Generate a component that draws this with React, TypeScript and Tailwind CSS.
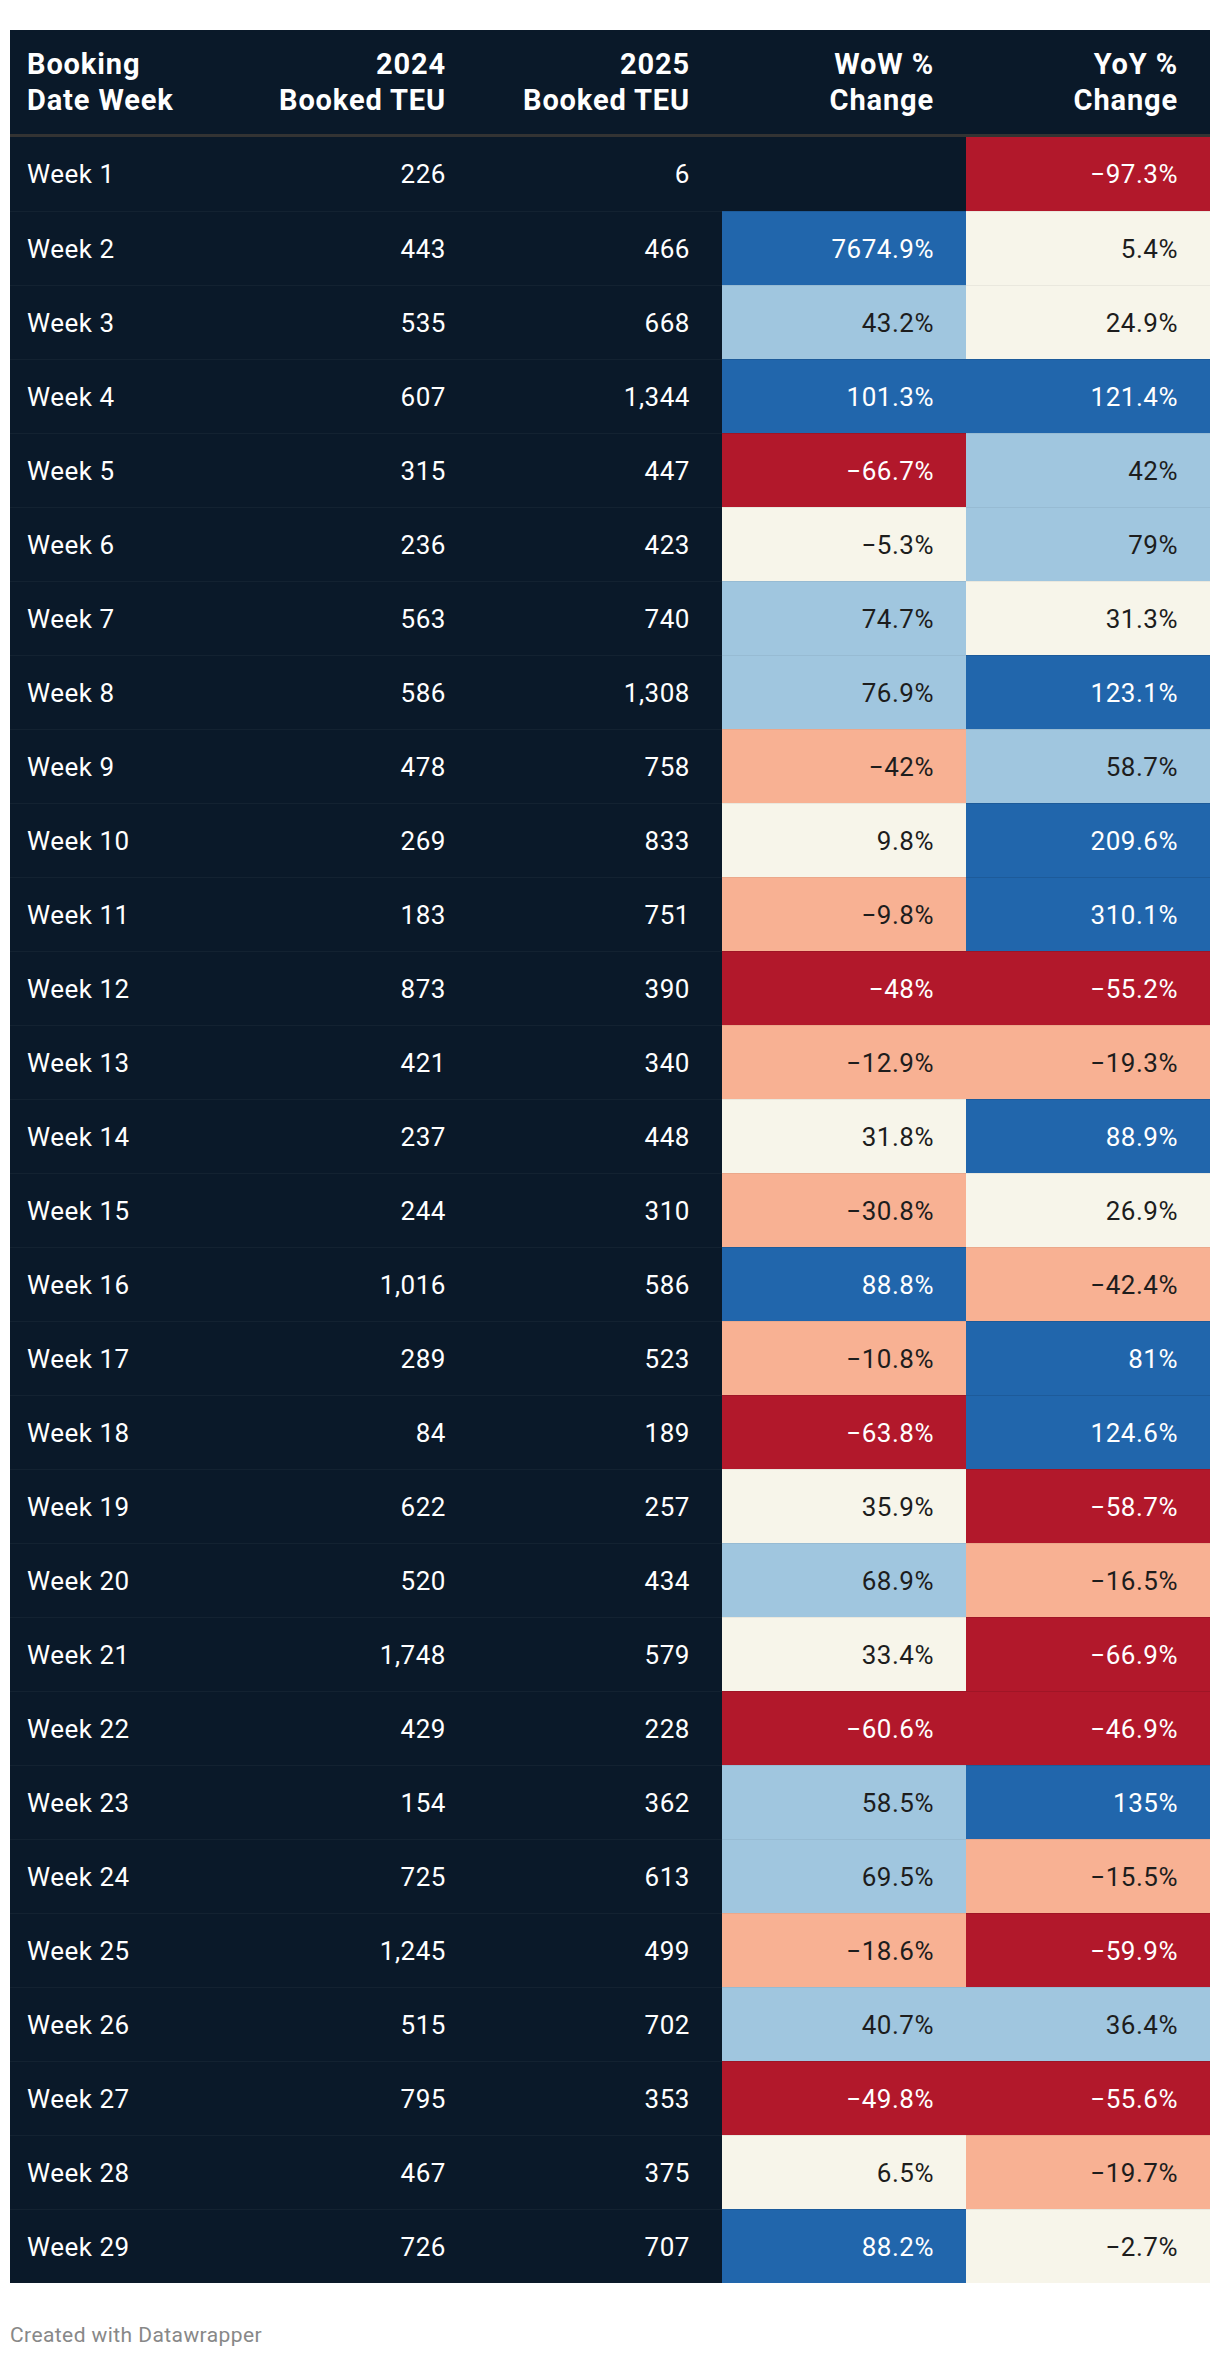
type Tone = "D" | "R" | "S" | "C" | "L" | "B";

type Row = {
  week: string;
  y2024: string;
  y2025: string;
  wow: string;
  wowTone: Tone;
  yoy: string;
  yoyTone: Tone;
};

const rows: Row[] = [
  { week: "Week 1", y2024: "226", y2025: "6", wow: "", wowTone: "D", yoy: "−97.3%", yoyTone: "R" },
  { week: "Week 2", y2024: "443", y2025: "466", wow: "7674.9%", wowTone: "B", yoy: "5.4%", yoyTone: "C" },
  { week: "Week 3", y2024: "535", y2025: "668", wow: "43.2%", wowTone: "L", yoy: "24.9%", yoyTone: "C" },
  { week: "Week 4", y2024: "607", y2025: "1,344", wow: "101.3%", wowTone: "B", yoy: "121.4%", yoyTone: "B" },
  { week: "Week 5", y2024: "315", y2025: "447", wow: "−66.7%", wowTone: "R", yoy: "42%", yoyTone: "L" },
  { week: "Week 6", y2024: "236", y2025: "423", wow: "−5.3%", wowTone: "C", yoy: "79%", yoyTone: "L" },
  { week: "Week 7", y2024: "563", y2025: "740", wow: "74.7%", wowTone: "L", yoy: "31.3%", yoyTone: "C" },
  { week: "Week 8", y2024: "586", y2025: "1,308", wow: "76.9%", wowTone: "L", yoy: "123.1%", yoyTone: "B" },
  { week: "Week 9", y2024: "478", y2025: "758", wow: "−42%", wowTone: "S", yoy: "58.7%", yoyTone: "L" },
  { week: "Week 10", y2024: "269", y2025: "833", wow: "9.8%", wowTone: "C", yoy: "209.6%", yoyTone: "B" },
  { week: "Week 11", y2024: "183", y2025: "751", wow: "−9.8%", wowTone: "S", yoy: "310.1%", yoyTone: "B" },
  { week: "Week 12", y2024: "873", y2025: "390", wow: "−48%", wowTone: "R", yoy: "−55.2%", yoyTone: "R" },
  { week: "Week 13", y2024: "421", y2025: "340", wow: "−12.9%", wowTone: "S", yoy: "−19.3%", yoyTone: "S" },
  { week: "Week 14", y2024: "237", y2025: "448", wow: "31.8%", wowTone: "C", yoy: "88.9%", yoyTone: "B" },
  { week: "Week 15", y2024: "244", y2025: "310", wow: "−30.8%", wowTone: "S", yoy: "26.9%", yoyTone: "C" },
  { week: "Week 16", y2024: "1,016", y2025: "586", wow: "88.8%", wowTone: "B", yoy: "−42.4%", yoyTone: "S" },
  { week: "Week 17", y2024: "289", y2025: "523", wow: "−10.8%", wowTone: "S", yoy: "81%", yoyTone: "B" },
  { week: "Week 18", y2024: "84", y2025: "189", wow: "−63.8%", wowTone: "R", yoy: "124.6%", yoyTone: "B" },
  { week: "Week 19", y2024: "622", y2025: "257", wow: "35.9%", wowTone: "C", yoy: "−58.7%", yoyTone: "R" },
  { week: "Week 20", y2024: "520", y2025: "434", wow: "68.9%", wowTone: "L", yoy: "−16.5%", yoyTone: "S" },
  { week: "Week 21", y2024: "1,748", y2025: "579", wow: "33.4%", wowTone: "C", yoy: "−66.9%", yoyTone: "R" },
  { week: "Week 22", y2024: "429", y2025: "228", wow: "−60.6%", wowTone: "R", yoy: "−46.9%", yoyTone: "R" },
  { week: "Week 23", y2024: "154", y2025: "362", wow: "58.5%", wowTone: "L", yoy: "135%", yoyTone: "B" },
  { week: "Week 24", y2024: "725", y2025: "613", wow: "69.5%", wowTone: "L", yoy: "−15.5%", yoyTone: "S" },
  { week: "Week 25", y2024: "1,245", y2025: "499", wow: "−18.6%", wowTone: "S", yoy: "−59.9%", yoyTone: "R" },
  { week: "Week 26", y2024: "515", y2025: "702", wow: "40.7%", wowTone: "L", yoy: "36.4%", yoyTone: "L" },
  { week: "Week 27", y2024: "795", y2025: "353", wow: "−49.8%", wowTone: "R", yoy: "−55.6%", yoyTone: "R" },
  { week: "Week 28", y2024: "467", y2025: "375", wow: "6.5%", wowTone: "C", yoy: "−19.7%", yoyTone: "S" },
  { week: "Week 29", y2024: "726", y2025: "707", wow: "88.2%", wowTone: "B", yoy: "−2.7%", yoyTone: "C" },
];

const toneClass: Record<Tone, string> = {
  D: "bg-[#0a1929] text-white border-white/[0.04]",
  R: "bg-[#b2182b] text-white border-black/10",
  S: "bg-[#f8b193] text-[#1d1d1d] border-black/5",
  C: "bg-[#f7f5ea] text-[#1d1d1d] border-black/5",
  L: "bg-[#a0c6df] text-[#1d1d1d] border-black/5",
  B: "bg-[#2166ac] text-white border-black/10",
};

function Cell({ children, tone, first }: { children: React.ReactNode; tone: Tone; first: boolean }) {
  return (
    <div
      className={`flex h-[74px] items-center justify-end pr-[32px] ${toneClass[tone]} ${first ? "" : "border-t"}`}
    >
      {children}
    </div>
  );
}

export default function App() {
  return (
    <div className="min-h-screen bg-white pt-[30px] font-['Roboto',sans-serif]">
      <div className="mx-[10px] w-[1200px]">
        <div className="grid h-[104px] grid-cols-[224px_244px_244px_244px_244px] items-center bg-[#0a1929] text-[29px] font-bold leading-[36px] tracking-[0.03em] text-white">
          <div className="pl-[17px]">
            Booking
            <br />
            Date Week
          </div>
          <div className="pr-[32px] text-right">
            2024
            <br />
            Booked TEU
          </div>
          <div className="pr-[32px] text-right">
            2025
            <br />
            Booked TEU
          </div>
          <div className="pr-[32px] text-right">
            WoW %
            <br />
            Change
          </div>
          <div className="pr-[32px] text-right">
            YoY %
            <br />
            Change
          </div>
        </div>
        <div className="h-[3px] bg-[#333333]" />
        <div className="grid grid-cols-[224px_244px_244px_244px_244px] text-[26px] leading-none tracking-[0.02em]">
          {rows.map((r, i) => {
            const first = i === 0;
            return (
              <div key={r.week} className="contents">
                <div
                  className={`flex h-[74px] items-center bg-[#0a1929] pl-[17px] text-white ${first ? "" : "border-t border-white/[0.04]"}`}
                >
                  {r.week}
                </div>
                <Cell tone="D" first={first}>
                  {r.y2024}
                </Cell>
                <Cell tone="D" first={first}>
                  {r.y2025}
                </Cell>
                <Cell tone={r.wowTone} first={first}>
                  {r.wow}
                </Cell>
                <Cell tone={r.yoyTone} first={first}>
                  {r.yoy}
                </Cell>
              </div>
            );
          })}
        </div>
      </div>
      <div className="mt-[40px] pl-[10px] text-[21px] leading-[24px] tracking-[0.02em] text-[#888888]">
        Created with Datawrapper
      </div>
    </div>
  );
}
